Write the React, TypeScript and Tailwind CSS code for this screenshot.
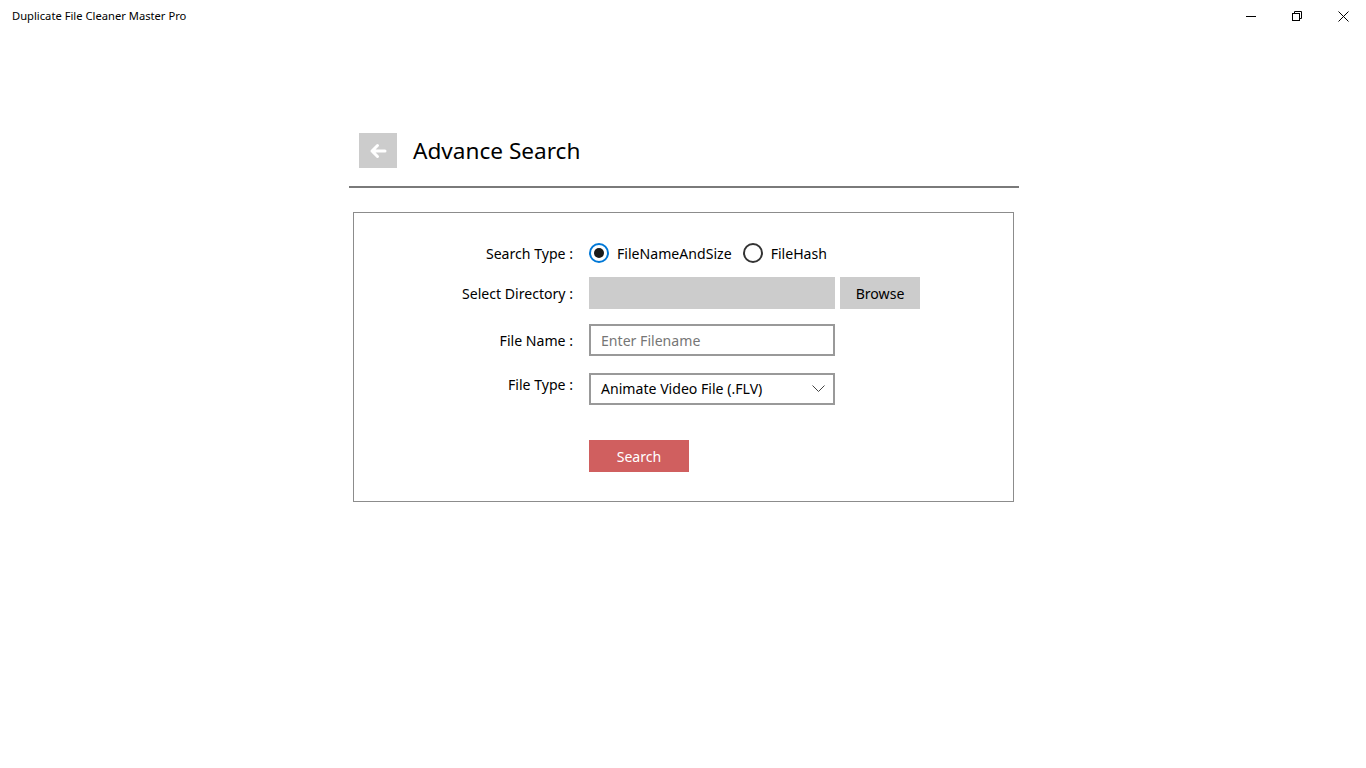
import { useState } from "react";

export default function App() {
  const [searchType, setSearchType] = useState<"size" | "hash">("size");

  return (
    <div
      className="h-[768px] w-[1366px] bg-white text-black"
      style={{ fontFamily: '"Noto Sans", "Open Sans", sans-serif' }}
    >
      {/* title bar */}
      <div className="flex h-8 items-center justify-between">
        <span className="pl-3 text-[11.2px]">Duplicate File Cleaner Master Pro</span>
        <div className="flex h-8">
          <button className="flex h-8 w-[46px] items-center justify-center">
            <svg width="10" height="10" viewBox="0 0 10 10">
              <path d="M0 5.5h10" stroke="#000" strokeWidth="1" />
            </svg>
          </button>
          <button className="flex h-8 w-[46px] items-center justify-center">
            <svg width="10" height="10" viewBox="0 0 10 10" fill="none" stroke="#000" strokeWidth="1">
              <rect x="0.5" y="2.5" width="7" height="7" />
              <path d="M2.5 2.5V0.5h7v7h-2" />
            </svg>
          </button>
          <button className="flex h-8 w-[46px] items-center justify-center">
            <svg width="11" height="11" viewBox="0 0 11 11">
              <path d="M0.5 0.5l10 10M10.5 0.5l-10 10" stroke="#000" strokeWidth="1" />
            </svg>
          </button>
        </div>
      </div>

      <div className="ml-[349px] mt-[101px] w-[670px]">
        {/* header */}
        <div className="flex h-[35px] items-center pl-[10px]">
          <button className="flex h-[35px] w-[38px] items-center justify-center bg-[#cccccc]">
            <svg width="18" height="16" viewBox="0 0 18 16" fill="none" stroke="#fff" strokeWidth="3" strokeLinecap="round" strokeLinejoin="round">
              <path d="M16 8H3M8.5 2.5L3 8l5.5 5.5" />
            </svg>
          </button>
          <h1 className="ml-4 pt-[2px] text-[22.6px] leading-none">Advance Search</h1>
        </div>
        <div className="mt-[18px] h-[2px] bg-[#7a7a7a]" />

        {/* form */}
        <div className="ml-1 mt-6 h-[290px] w-[661px] border border-[#8c8c8c] pt-6 text-[14.1px]">
          <div className="grid grid-cols-[219px_1fr] gap-x-4">
            <div className="flex h-8 items-center justify-end pt-[2px]">Search Type :</div>
            <div className="flex h-8 items-center">
              <label className="flex cursor-pointer items-center" onClick={() => setSearchType("size")}>
                <span
                  className={
                    "flex h-5 w-5 items-center justify-center rounded-full border-2 " +
                    (searchType === "size" ? "border-[#0078d7]" : "border-[#333333]")
                  }
                >
                  {searchType === "size" && <span className="h-2.5 w-2.5 rounded-full bg-[#1a1a1a]" />}
                </span>
                <span className="ml-2 pt-[2px]">FileNameAndSize</span>
              </label>
              <label className="ml-[11px] flex cursor-pointer items-center" onClick={() => setSearchType("hash")}>
                <span
                  className={
                    "flex h-5 w-5 items-center justify-center rounded-full border-2 " +
                    (searchType === "hash" ? "border-[#0078d7]" : "border-[#333333]")
                  }
                >
                  {searchType === "hash" && <span className="h-2.5 w-2.5 rounded-full bg-[#1a1a1a]" />}
                </span>
                <span className="ml-2 pt-[2px]">FileHash</span>
              </label>
            </div>

            <div className="mt-2 flex h-8 items-center justify-end pt-[2px]">Select Directory :</div>
            <div className="mt-2 flex h-8">
              <div className="h-8 w-[246px] bg-[#cccccc]" />
              <button className="ml-[5px] h-8 w-20 bg-[#cccccc] pt-[2px]">Browse</button>
            </div>

            <div className="mt-[15px] flex h-8 items-center justify-end pt-[2px]">File Name :</div>
            <div className="mt-[15px]">
              <input
                placeholder="Enter Filename"
                className="h-8 w-[246px] border-2 border-[#999999] px-[10px] outline-none placeholder:text-[#767676]"
              />
            </div>

            <div className="mt-[17px] flex h-8 items-start justify-end pt-[1px]">File Type :</div>
            <div className="mt-[17px]">
              <div className="flex h-8 w-[246px] items-center justify-between border-2 border-[#999999] pl-[10px] pr-[8px]">
                <span>Animate Video File (.FLV)</span>
                <svg width="13" height="8" viewBox="0 0 13 8" fill="none" stroke="#444" strokeWidth="1">
                  <path d="M0.5 0.5l6 6 6-6" />
                </svg>
              </div>
            </div>

            <div />
            <div className="mt-[35px]">
              <button className="h-8 w-[100px] bg-[#d05f5f] pt-[2px] text-white">Search</button>
            </div>
          </div>
        </div>
      </div>
    </div>
  );
}
